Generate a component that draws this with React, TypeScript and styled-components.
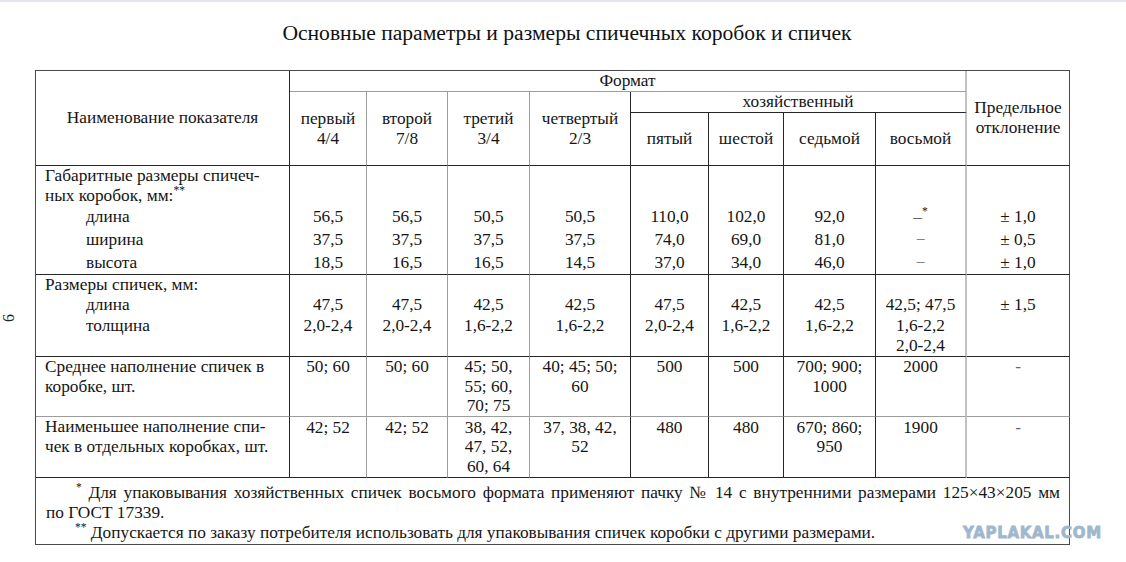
import React from "react";
import styled, { createGlobalStyle } from "styled-components";

const SERIF = `"Liberation Serif", "DejaVu Serif", "Times New Roman", Times, serif`;

const GlobalStyle = createGlobalStyle`
  html, body { margin: 0; padding: 0; background: #fff; }
  body { font-family: ${SERIF}; color: #151515; }
`;

type Edge = "dark" | "gray" | "light" | "outer";

const edge = (e: Edge) =>
  e === "gray"
    ? "1px solid #9d9d9d"
    : e === "light"
    ? "2px solid #c2c2c2"
    : e === "outer"
    ? "1px solid #4a4a4a"
    : "1px solid #262626";

const Page = styled.div`
  position: relative;
  width: 1126px;
  height: 562px;
  overflow: hidden;
  background: #fff;
  font-family: ${SERIF};
`;

const TopBar = styled.div`
  height: 2px;
  background: #e3e7ed;
`;

const Title = styled.h1`
  margin: 19px 0 25px;
  padding-left: 8px;
  font-family: ${SERIF};
  font-weight: normal;
  font-size: 21.6px;
  line-height: 24px;
  text-align: center;
  color: #111;
`;

const Table = styled.table`
  margin-left: 35px;
  width: 1035px;
  table-layout: fixed;
  border-collapse: separate;
  border-spacing: 0;
  border-top: 1px solid #4a4a4a;
  border-left: 1px solid #4a4a4a;
  font-family: ${SERIF};
  font-size: 17.3px;
  line-height: 20px;
  color: #151515;
`;

const Row = styled.tr<{ $h: number }>`
  height: ${(p) => p.$h}px;
`;

const Th = styled.th<{ $r: Edge; $b: Edge }>`
  font-family: ${SERIF};
  font-weight: normal;
  text-align: center;
  vertical-align: middle;
  padding: 0 2px;
  line-height: 20px;
  border-right: ${(p) => edge(p.$r)};
  border-bottom: ${(p) => edge(p.$b)};
`;

const Td = styled.td<{
  $r: Edge;
  $b: Edge;
  $valign?: "top" | "bottom" | "middle";
  $lh: number;
  $pt?: number;
}>`
  font-family: ${SERIF};
  text-align: center;
  vertical-align: ${(p) => p.$valign ?? "top"};
  padding: ${(p) => p.$pt ?? 0}px 2px 0;
  line-height: ${(p) => p.$lh}px;
  border-right: ${(p) => edge(p.$r)};
  border-bottom: ${(p) => edge(p.$b)};
  white-space: nowrap;
`;

const LabelCell = styled(Td)`
  text-align: left;
  padding-left: 9px;
`;

const Line = styled.div<{ $indent?: boolean; $lh?: number }>`
  padding-left: ${(p) => (p.$indent ? 41 : 0)}px;
  line-height: ${(p) => (p.$lh ? `${p.$lh}px` : "inherit")};
`;

const Dash = styled.span`
  color: #666;
`;

const Sup = styled.sup`
  font-size: 11.5px;
  line-height: 0;
  vertical-align: 7px;
`;

const FootCell = styled.td`
  font-family: ${SERIF};
  padding: 3px 9px 0 10px;
  line-height: 20px;
  border-right: 1px solid #4a4a4a;
  border-bottom: 1px solid #4a4a4a;
  text-align: justify;
`;

const FootPara = styled.p<{ $indent: number; $full?: boolean }>`
  margin: 0;
  height: 20px;
  text-indent: ${(p) => p.$indent}px;
  text-align: justify;
  text-align-last: ${(p) => (p.$full ? "justify" : "left")};
`;

const Watermark = styled.div`
  position: absolute;
  left: 963px;
  top: 524px;
  font-family: "DejaVu Sans", "Liberation Sans", sans-serif;
  font-weight: 900;
  font-size: 15px;
  letter-spacing: 0.7px;
  color: #9fb8cd;
  -webkit-text-stroke: 0.8px #9fb8cd;
`;

const PageNumber = styled.div`
  position: absolute;
  left: 4px;
  top: 308px;
  font-size: 16px;
  line-height: 20px;
  color: #222;
  transform: rotate(90deg);
`;

const colWidths = [254, 77, 81, 82, 101, 78, 75, 92, 91, 103];
const rightEdges: Edge[] = [
  "dark",
  "gray",
  "gray",
  "gray",
  "dark",
  "dark",
  "dark",
  "dark",
  "light",
  "outer",
];

type Value = React.ReactNode;

type BodyRow = {
  h: number;
  lh: number;
  bottom: Edge;
  label: { text: Value; indent?: boolean; lh?: number }[];
  valign: "top" | "bottom";
  pt: number;
  values: Value[][];
};

const dashes = (
  <>
    <Dash>–</Dash>
    <Sup>*</Sup>
  </>
);

const rows: BodyRow[] = [
  {
    h: 109,
    lh: 23,
    bottom: "dark",
    valign: "bottom",
    pt: 0,
    label: [
      { text: "Габаритные размеры спичеч-", lh: 19.5 },
      {
        text: (
          <>
            ных коробок, мм:<Sup>**</Sup>
          </>
        ),
        lh: 19.5,
      },
      { text: "длина", indent: true, lh: 23 },
      { text: "ширина", indent: true, lh: 23 },
      { text: "высота", indent: true, lh: 23 },
    ],
    values: [
      ["56,5", "37,5", "18,5"],
      ["56,5", "37,5", "16,5"],
      ["50,5", "37,5", "16,5"],
      ["50,5", "37,5", "14,5"],
      ["110,0", "74,0", "37,0"],
      ["102,0", "69,0", "34,0"],
      ["92,0", "81,0", "46,0"],
      [dashes, <Dash>−</Dash>, <Dash>−</Dash>],
      ["± 1,0", "± 0,5", "± 1,0"],
    ],
  },
  {
    h: 82,
    lh: 20.25,
    bottom: "dark",
    valign: "top",
    pt: 20.25,
    label: [
      { text: "Размеры спичек, мм:" },
      { text: "длина", indent: true },
      { text: "толщина", indent: true },
    ],
    values: [
      ["47,5", "2,0-2,4"],
      ["47,5", "2,0-2,4"],
      ["42,5", "1,6-2,2"],
      ["42,5", "1,6-2,2"],
      ["47,5", "2,0-2,4"],
      ["42,5", "1,6-2,2"],
      ["42,5", "1,6-2,2"],
      ["42,5; 47,5", "1,6-2,2", "2,0-2,4"],
      ["± 1,5"],
    ],
  },
  {
    h: 60,
    lh: 19.6,
    bottom: "gray",
    valign: "top",
    pt: 0,
    label: [{ text: "Среднее наполнение спичек в" }, { text: "коробке, шт." }],
    values: [
      ["50; 60"],
      ["50; 60"],
      ["45; 50,", "55; 60,", "70; 75"],
      ["40; 45; 50;", "60"],
      ["500"],
      ["500"],
      ["700; 900;", "1000"],
      ["2000"],
      [<Dash>-</Dash>],
    ],
  },
  {
    h: 61,
    lh: 19.8,
    bottom: "dark",
    valign: "top",
    pt: 0.5,
    label: [
      { text: "Наименьшее наполнение спи-" },
      { text: "чек в отдельных коробках, шт." },
    ],
    values: [
      ["42; 52"],
      ["42; 52"],
      ["38, 42,", "47, 52,", "60, 64"],
      ["37, 38, 42,", "52"],
      ["480"],
      ["480"],
      ["670; 860;", "950"],
      ["1900"],
      [<Dash>-</Dash>],
    ],
  },
];

const formatCols = [
  ["первый", "4/4"],
  ["второй", "7/8"],
  ["третий", "3/4"],
  ["четвертый", "2/3"],
];

const householdCols = ["пятый", "шестой", "седьмой", "восьмой"];

export default function App() {
  return (
    <Page>
      <GlobalStyle />
      <TopBar />
      <Title>Основные параметры и размеры спичечных коробок и спичек</Title>
      <Table>
        <colgroup>
          {colWidths.map((w, i) => (
            <col key={i} style={{ width: w }} />
          ))}
        </colgroup>
        <thead>
          <Row $h={20}>
            <Th rowSpan={3} $r="dark" $b="dark">
              Наименование показателя
            </Th>
            <Th colSpan={8} $r="light" $b="gray">
              Формат
            </Th>
            <Th rowSpan={3} $r="outer" $b="dark">
              Предельное
              <br />
              отклонение
            </Th>
          </Row>
          <Row $h={21}>
            {formatCols.map(([name, frac], i) => (
              <Th key={name} rowSpan={2} $r={rightEdges[i + 1]} $b="dark">
                {name}
                <br />
                {frac}
              </Th>
            ))}
            <Th colSpan={4} $r="light" $b="dark">
              хозяйственный
            </Th>
          </Row>
          <Row $h={53}>
            {householdCols.map((name, i) => (
              <Th key={name} $r={rightEdges[i + 5]} $b="dark">
                {name}
              </Th>
            ))}
          </Row>
        </thead>
        <tbody>
          {rows.map((row, ri) => (
            <Row key={ri} $h={row.h}>
              <LabelCell $r="dark" $b={row.bottom} $lh={row.lh}>
                {row.label.map((l, li) => (
                  <Line key={li} $indent={l.indent} $lh={l.lh}>
                    {l.text}
                  </Line>
                ))}
              </LabelCell>
              {row.values.map((vals, ci) => (
                <Td
                  key={ci}
                  $r={rightEdges[ci + 1]}
                  $b={row.bottom}
                  $lh={row.lh}
                  $valign={row.valign}
                  $pt={row.pt}
                >
                  {vals.map((v, vi) => (
                    <Line key={vi}>{v}</Line>
                  ))}
                </Td>
              ))}
            </Row>
          ))}
          <Row $h={67}>
            <FootCell colSpan={10}>
              <FootPara $indent={30} $full>
                <Sup>*</Sup> Для упаковывания хозяйственных спичек восьмого формата
                применяют пачку № 14 с внутренними размерами 125×43×205 мм
              </FootPara>
              <FootPara $indent={0}>по ГОСТ 17339.</FootPara>
              <FootPara $indent={29}>
                <Sup>**</Sup> Допускается по заказу потребителя использовать для
                упаковывания спичек коробки с другими размерами.
              </FootPara>
            </FootCell>
          </Row>
        </tbody>
      </Table>
      <PageNumber>9</PageNumber>
      <Watermark>YAPLAKAL.COM</Watermark>
    </Page>
  );
}
